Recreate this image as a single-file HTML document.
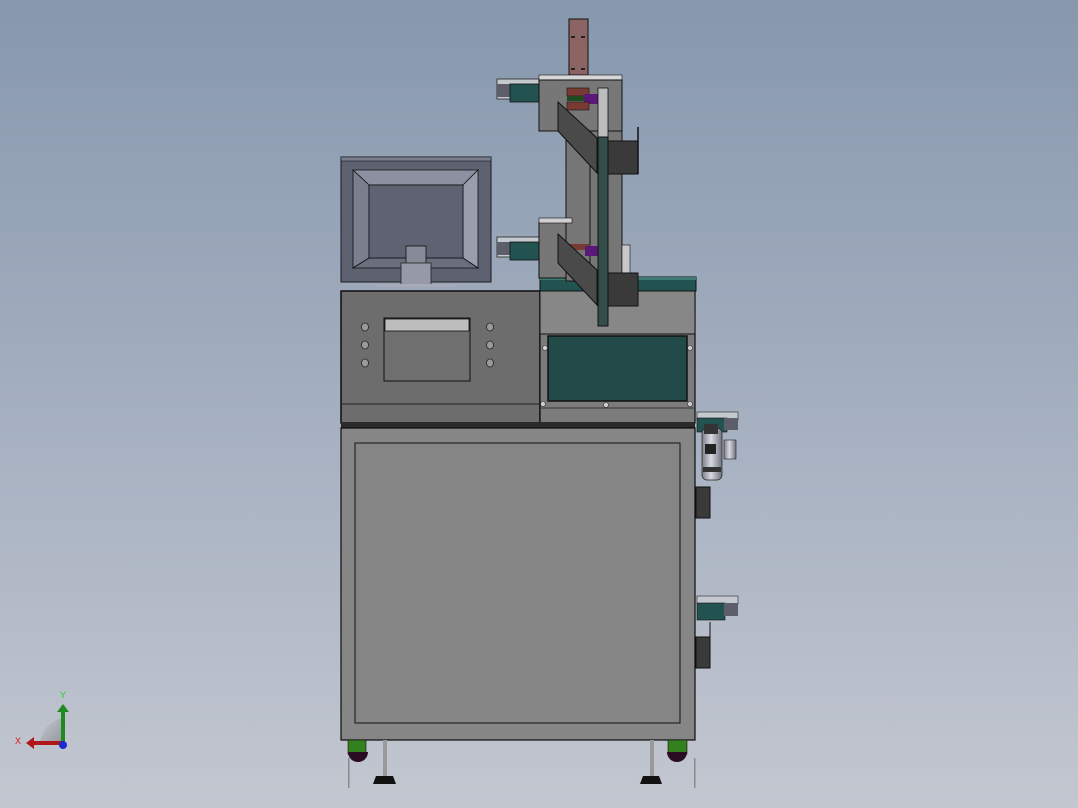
<!DOCTYPE html>
<html><head><meta charset="utf-8"><style>
html,body{margin:0;padding:0;width:1078px;height:808px;overflow:hidden}
body{background:linear-gradient(#8798ad 0%,#a4afc0 50%,#c3c7d0 100%)}
svg{display:block}
</style></head><body>
<svg width="1078" height="808" viewBox="0 0 1078 808" xmlns="http://www.w3.org/2000/svg" stroke-linejoin="miter">
<defs>
<linearGradient id="mot" x1="0" x2="1"><stop offset="0" stop-color="#7a7c88"/><stop offset=".45" stop-color="#d8dae2"/><stop offset="1" stop-color="#6e707c"/></linearGradient>
<linearGradient id="arc" x1="0" y1="0" x2="1" y2="1"><stop offset="0" stop-color="#c7cad0"/><stop offset="1" stop-color="#8f939a"/></linearGradient>
</defs>
<!-- monitor -->
<rect x="341" y="157" width="150" height="125" fill="#5d6170" stroke="#1a1a1a"/>
<rect x="341" y="157" width="150" height="4" fill="#7a7e8c" stroke="#1a1a1a" stroke-width=".6"/>
<polygon points="353,170 478,170 463,185 369,185" fill="#8c90a0" stroke="#111" stroke-width=".8"/>
<polygon points="353,170 369,185 369,258 353,268" fill="#7a7e8d" stroke="#111" stroke-width=".8"/>
<polygon points="478,170 463,185 463,258 478,268" fill="#9a9eac" stroke="#111" stroke-width=".8"/>
<polygon points="353,268 369,258 463,258 478,268" fill="#6b6f7d" stroke="#111" stroke-width=".8"/>
<rect x="369" y="185" width="94" height="73" fill="#5f6273" stroke="#111" stroke-width=".8"/>
<rect x="406" y="246" width="20" height="20" fill="#878a98" stroke="#111" stroke-width=".8"/>
<rect x="401" y="263" width="30" height="22" fill="#9699a8" stroke="#222" stroke-width=".8"/>
<rect x="376" y="284" width="80" height="3" fill="#a7abb8"/>
<!-- control box -->
<rect x="341" y="291" width="199" height="132" fill="#6d6d6d" stroke="#0c0c0c" stroke-width="1.5"/>
<line x1="341" y1="404" x2="540" y2="404" stroke="#222"/>
<rect x="384" y="318" width="86" height="63" fill="#6f6f6f" stroke="#111"/>
<rect x="385" y="319" width="84" height="12" fill="#bdbdbd" stroke="#111" stroke-width=".8"/>
<g fill="#9a9a9a" stroke="#222" stroke-width=".8">
<ellipse cx="365" cy="327" rx="3.5" ry="4"/><ellipse cx="365" cy="345" rx="3.5" ry="4"/><ellipse cx="365" cy="363" rx="3.5" ry="4"/>
<ellipse cx="490" cy="327" rx="3.5" ry="4"/><ellipse cx="490" cy="345" rx="3.5" ry="4"/><ellipse cx="490" cy="363" rx="3.5" ry="4"/>
</g>
<!-- right box -->
<rect x="540" y="291" width="155" height="132" fill="#7c7c7c" stroke="#0c0c0c" stroke-width="1.2"/>
<rect x="540" y="291" width="155" height="43" fill="#878787" stroke="#111"/>
<rect x="548" y="336" width="139" height="65" fill="#224a48" stroke="#111" stroke-width="1.5"/>
<line x1="540" y1="408" x2="695" y2="408" stroke="#333"/>
<g fill="#cfcfcf" stroke="#333" stroke-width=".6"><circle cx="545" cy="348" r="2.5"/><circle cx="690" cy="348" r="2.5"/><circle cx="543" cy="404" r="2.5"/><circle cx="606" cy="405" r="2.5"/><circle cx="690" cy="404" r="2.5"/></g>
<!-- teal conveyor strip -->
<rect x="540" y="277" width="156" height="14" fill="#235350" stroke="#111"/>
<rect x="540" y="277" width="156" height="3" fill="#3d7a74"/>
<!-- separator -->
<rect x="341" y="422" width="354" height="6" fill="#2a2a2a"/>
<!-- cabinet -->
<rect x="341" y="428" width="354" height="312" fill="#868686" stroke="#0c0c0c" stroke-width="1.2"/>
<rect x="355" y="443" width="325" height="280" fill="#858585" stroke="#111"/>
<!-- wheels and legs -->
<rect x="348" y="740" width="18" height="14" fill="#33801f" stroke="#111" stroke-width=".6"/>
<path d="M348 752 a10 10 0 0 0 20 0z" fill="#2a0d22"/>
<rect x="668" y="740" width="19" height="14" fill="#33801f" stroke="#111" stroke-width=".6"/>
<path d="M667 752 a10 10 0 0 0 20 0z" fill="#2a0d22"/>
<rect x="383" y="740" width="4" height="36" fill="#9a9a9a"/>
<rect x="650" y="740" width="4" height="36" fill="#9a9a9a"/>
<polygon points="376,776 393,776 396,784 373,784" fill="#111"/>
<polygon points="643,776 659,776 662,784 640,784" fill="#111"/>
<rect x="348" y="758" width="1.5" height="30" fill="#8a8a8a"/>
<rect x="694" y="758" width="1.5" height="30" fill="#8a8a8a"/>
<!-- tower -->
<rect x="569" y="19" width="19" height="56" fill="#8d6464" stroke="#111"/>
<g fill="#222"><rect x="571" y="36" width="4" height="2"/><rect x="581" y="36" width="4" height="2"/><rect x="571" y="68" width="4" height="2"/><rect x="581" y="68" width="4" height="2"/></g>
<!-- left rails -->
<rect x="497" y="79" width="44" height="20" fill="#c4c8cf" stroke="#222" stroke-width=".8"/>
<rect x="497" y="84" width="14" height="13" fill="#5c5f6a"/>
<rect x="510" y="84" width="30" height="18" fill="#235350" stroke="#111" stroke-width=".8"/>
<rect x="497" y="237" width="44" height="20" fill="#c4c8cf" stroke="#222" stroke-width=".8"/>
<rect x="497" y="242" width="14" height="13" fill="#5c5f6a"/>
<rect x="510" y="242" width="30" height="18" fill="#235350" stroke="#111" stroke-width=".8"/>
<!-- plates -->
<rect x="539" y="75" width="83" height="5" fill="#d7d7d7" stroke="#111" stroke-width=".6"/>
<rect x="539" y="80" width="83" height="51" fill="#777" stroke="#111"/>
<rect x="566" y="131" width="56" height="150" fill="#767676" stroke="#111"/>
<line x1="590" y1="131" x2="590" y2="280" stroke="#111"/>
<rect x="539" y="222" width="27" height="56" fill="#777" stroke="#111"/>
<rect x="539" y="218" width="33" height="5" fill="#d0d0d0" stroke="#111" stroke-width=".6"/>
<!-- colored blocks -->
<rect x="567" y="88" width="22" height="8" fill="#7a3a34" stroke="#111" stroke-width=".6"/>
<rect x="567" y="96" width="20" height="5" fill="#1f4a20"/>
<rect x="584" y="94" width="18" height="10" fill="#5a1878"/>
<rect x="567" y="102" width="22" height="8" fill="#7a3a34" stroke="#111" stroke-width=".6"/>
<rect x="569" y="244" width="20" height="6" fill="#7a3a34"/><rect x="585" y="246" width="15" height="10" fill="#5a1878"/>
<rect x="598" y="88" width="10" height="50" fill="#bdbdbd" stroke="#111" stroke-width=".8"/>
<rect x="622" y="245" width="8" height="28" fill="#c8c8c8" stroke="#111" stroke-width=".6"/>
<!-- chutes -->
<polygon points="558,102 597,138 597,173 558,131" fill="#4a4a4a" stroke="#111"/>
<polygon points="558,234 597,270 597,305 558,263" fill="#4a4a4a" stroke="#111"/>
<rect x="598" y="141" width="40" height="33" fill="#3a3a3a" stroke="#111"/>
<line x1="638" y1="127" x2="638" y2="174" stroke="#111" stroke-width="1.5"/>
<rect x="598" y="273" width="40" height="33" fill="#3a3a3a" stroke="#111"/>
<!-- green vertical bar -->
<rect x="598" y="137" width="10" height="189" fill="#334d4b" stroke="#111"/>
<!-- right side modules -->
<rect x="697" y="412" width="41" height="8" fill="#c4c8cf" stroke="#222" stroke-width=".6"/>
<rect x="697" y="418" width="30" height="14" fill="#235350" stroke="#111" stroke-width=".6"/>
<rect x="724" y="418" width="14" height="12" fill="#5c5f6a"/>
<rect x="702" y="428" width="20" height="52" rx="5" fill="url(#mot)" stroke="#222" stroke-width=".7"/>
<rect x="704" y="424" width="14" height="10" fill="#333"/>
<rect x="705" y="444" width="11" height="10" fill="#222"/>
<rect x="703" y="467" width="18" height="5" fill="#333"/>
<rect x="724" y="440" width="12" height="19" fill="url(#mot)" stroke="#222" stroke-width=".6"/>
<rect x="696" y="487" width="14" height="31" fill="#3a3a3a" stroke="#111"/>
<rect x="697" y="596" width="41" height="8" fill="#c4c8cf" stroke="#222" stroke-width=".6"/>
<rect x="697" y="603" width="28" height="17" fill="#235350" stroke="#111" stroke-width=".6"/>
<rect x="724" y="603" width="14" height="13" fill="#5c5f6a"/>
<rect x="696" y="637" width="14" height="31" fill="#3a3a3a" stroke="#111"/>
<line x1="710" y1="622" x2="710" y2="668" stroke="#111"/>
<!-- axis triad -->
<path d="M40 745 A27 27 0 0 1 63 718 L63 745Z" fill="url(#arc)"/>
<rect x="61" y="710" width="4" height="35" fill="#1f8a1f"/>
<polygon points="57,712 63,704 69,712" fill="#1f8a1f"/>
<rect x="33" y="741" width="30" height="4" fill="#b01818"/>
<polygon points="34,737 26,743 34,749" fill="#b01818"/>
<circle cx="63" cy="745" r="4" fill="#1a2ad0"/>
<text x="60" y="698" font-family="Liberation Sans, sans-serif" font-size="9" fill="#1fd01f">Y</text>
<text x="15" y="744" font-family="Liberation Sans, sans-serif" font-size="9" fill="#e01818">X</text>
</svg>
</body></html>
